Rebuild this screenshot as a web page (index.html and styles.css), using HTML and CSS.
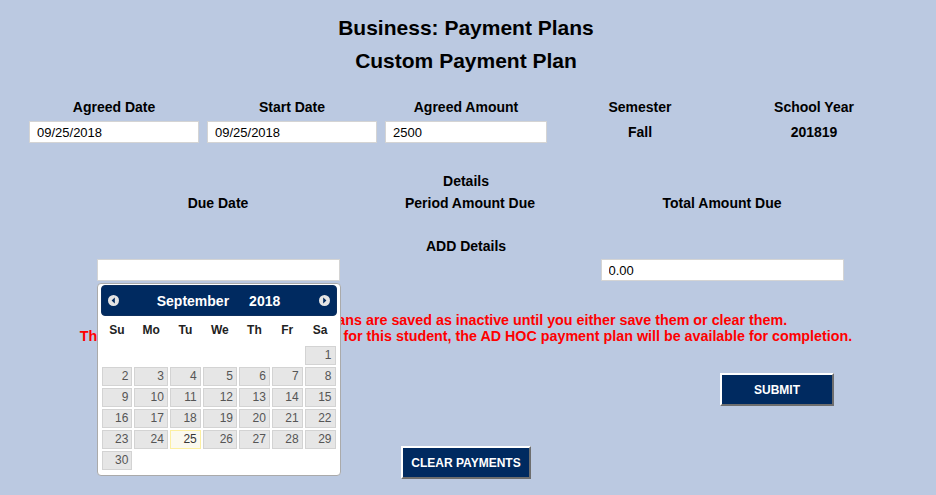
FILE: index.html
```html
<!DOCTYPE html>
<html>
<head>
<meta charset="utf-8">
<title>Business: Payment Plans</title>
<link rel="stylesheet" href="styles.css">
</head>
<body>
<div class="page">
    <h1 class="title">Business: Payment Plans</h1>
    <h2 class="title">Custom Payment Plan</h2>

    <div class="plan-grid">
        <div class="field">
            <div class="label">Agreed Date</div>
            <input class="text-box" type="text" value="09/25/2018">
        </div>
        <div class="field">
            <div class="label">Start Date</div>
            <input class="text-box" type="text" value="09/25/2018">
        </div>
        <div class="field">
            <div class="label">Agreed Amount</div>
            <input class="text-box amount" type="text" value="2500">
        </div>
        <div class="field">
            <div class="label">Semester</div>
            <div class="value">Fall</div>
        </div>
        <div class="field">
            <div class="label">School Year</div>
            <div class="value">201819</div>
        </div>
    </div>

    <div class="section-title details">Details</div>
    <div class="details-grid heads">
        <div class="label">Due Date</div>
        <div class="label">Period Amount Due</div>
        <div class="label">Total Amount Due</div>
    </div>

    <div class="section-title add">ADD Details</div>
    <div class="details-grid inputs">
        <div class="due-cell">
            <input class="text-box wide" type="text" value="">
            <div class="datepicker">
                <div class="dp-header">
                    <span class="dp-nav">
                        <svg width="11" height="11" viewBox="0 0 11 11"><circle cx="5.5" cy="5.5" r="5.5" fill="#e4e4e4"/><polygon points="6.8,2.6 3.6,5.5 6.8,8.4" fill="#002a60"/></svg>
                    </span>
                    <div class="dp-title"><span>September</span><span>2018</span></div>
                    <span class="dp-nav">
                        <svg width="11" height="11" viewBox="0 0 11 11"><circle cx="5.5" cy="5.5" r="5.5" fill="#e4e4e4"/><polygon points="4.2,2.6 7.4,5.5 4.2,8.4" fill="#002a60"/></svg>
                    </span>
                </div>
                <table class="dp-table">
                    <thead>
                        <tr><th>Su</th><th>Mo</th><th>Tu</th><th>We</th><th>Th</th><th>Fr</th><th>Sa</th></tr>
                    </thead>
                    <tbody>
                        <tr><td></td><td></td><td></td><td></td><td></td><td></td><td><a class="day">1</a></td></tr>
                        <tr><td><a class="day">2</a></td><td><a class="day">3</a></td><td><a class="day">4</a></td><td><a class="day">5</a></td><td><a class="day">6</a></td><td><a class="day">7</a></td><td><a class="day">8</a></td></tr>
                        <tr><td><a class="day">9</a></td><td><a class="day">10</a></td><td><a class="day">11</a></td><td><a class="day">12</a></td><td><a class="day">13</a></td><td><a class="day">14</a></td><td><a class="day">15</a></td></tr>
                        <tr><td><a class="day">16</a></td><td><a class="day">17</a></td><td><a class="day">18</a></td><td><a class="day">19</a></td><td><a class="day">20</a></td><td><a class="day">21</a></td><td><a class="day">22</a></td></tr>
                        <tr><td><a class="day">23</a></td><td><a class="day">24</a></td><td><a class="day today">25</a></td><td><a class="day">26</a></td><td><a class="day">27</a></td><td><a class="day">28</a></td><td><a class="day">29</a></td></tr>
                        <tr><td><a class="day">30</a></td><td></td><td></td><td></td><td></td><td></td><td></td></tr>
                    </tbody>
                </table>
            </div>
        </div>
        <div></div>
        <div>
            <input class="text-box wide" type="text" value="0.00">
        </div>
    </div>

    <p class="notice">
        Note: All custom payment plans are saved as inactive until you either save them or clear them.<br>
        The custom payment plan must be set for this student, the AD HOC payment plan will be available for completion.
    </p>

    <div class="submit-row">
        <button class="nav-button submit">SUBMIT</button>
    </div>
    <div class="clear-row">
        <button class="nav-button">CLEAR PAYMENTS</button>
    </div>
</div>
</body>
</html>
```

FILE: styles.css
```css
* {
    margin: 0;
    padding: 0;
    box-sizing: border-box;
}

html, body {
    width: 100%;
    height: 100%;
    background-color: #bbc9e1;
    font-family: 'Liberation Sans', Arial, sans-serif;
    color: #000;
    overflow: hidden;
}

.page {
    width: 932px;
    padding-top: 11px;
}

.title {
    font-size: 21px;
    font-weight: bold;
    line-height: 33px;
    text-align: center;
}

.label, .value, .section-title {
    font-size: 14px;
    font-weight: bold;
    line-height: 16px;
    text-align: center;
}

/* top row: dates, amount, semester */
.plan-grid {
    display: grid;
    grid-template-columns: 182px repeat(4, 174px);
    margin: 22px 0 0 23px;
}

.plan-grid .field {
    display: flex;
    flex-direction: column;
    align-items: center;
    gap: 6px;
}

.plan-grid .value {
    line-height: 22px;
}

.text-box {
    width: 170px;
    height: 22px;
    border: 1px solid #d4d4d4;
    background: #fff;
    padding: 0 7px;
    font-family: 'Liberation Sans', Arial, sans-serif;
    font-size: 13px;
    color: #000;
    outline: none;
}

.text-box.amount {
    width: 162px;
}

.text-box.wide {
    width: 243px;
}

.section-title.details {
    margin-top: 30px;
}

.section-title.add {
    margin-top: 27px;
}

.details-grid {
    display: grid;
    grid-template-columns: repeat(3, 252px);
    margin-left: 92px;
}

.details-grid.heads {
    margin-top: 6px;
}

.details-grid.inputs {
    margin-top: 5px;
    justify-items: center;
}

.due-cell {
    position: relative;
}

/* date picker popup */
.datepicker {
    position: absolute;
    top: 24px;
    left: 0;
    z-index: 10;
    width: 244px;
    padding: 1px 3px 0;
    background: #fff;
    border: 1px solid #aaa;
    border-radius: 4px;
    font-family: 'Liberation Sans', Arial, sans-serif;
}

.dp-header {
    display: flex;
    align-items: center;
    height: 31px;
    padding: 0 6px;
    background: #002a60;
    border: 1px solid #0d2f5e;
    border-radius: 4px;
}

.dp-nav {
    display: flex;
    width: 11px;
    height: 11px;
}

.dp-title {
    flex: 1;
    display: flex;
    justify-content: center;
    gap: 20px;
    color: #fff;
    font-size: 14px;
    font-weight: bold;
}

.dp-table {
    width: 100%;
    border-collapse: collapse;
    margin-bottom: 4px;
    font-size: 12px;
}

.dp-table th {
    padding: 7px 4px;
    line-height: 15px;
    font-weight: bold;
    color: #222;
    text-align: center;
}

.dp-table td {
    padding: 1px;
}

.dp-table .day {
    display: block;
    padding: 2px 3px;
    line-height: 13px;
    text-align: right;
    color: #555;
    background: #e6e6e6;
    border: 1px solid #d3d3d3;
    text-decoration: none;
}

.dp-table .day.today {
    background: #fbf9ee;
    border-color: #fcefa1;
    color: #363636;
}

.notice {
    margin-top: 31px;
    font-size: 14.3px;
    font-weight: bold;
    line-height: 16px;
    color: #f00;
    text-align: center;
}

.nav-button {
    height: 33px;
    padding: 0 8px;
    background: #002a60;
    color: #fff;
    font-family: 'Liberation Sans', Arial, sans-serif;
    font-size: 12px;
    font-weight: bold;
    border: 2px solid;
    border-color: #fff #6e6e6e #6e6e6e #fff;
    cursor: pointer;
}

.nav-button.submit {
    width: 114px;
}

.submit-row {
    display: flex;
    justify-content: flex-end;
    margin-top: 29px;
    padding-right: 98px;
}

.clear-row {
    display: flex;
    justify-content: center;
    margin-top: 40px;
}
```
